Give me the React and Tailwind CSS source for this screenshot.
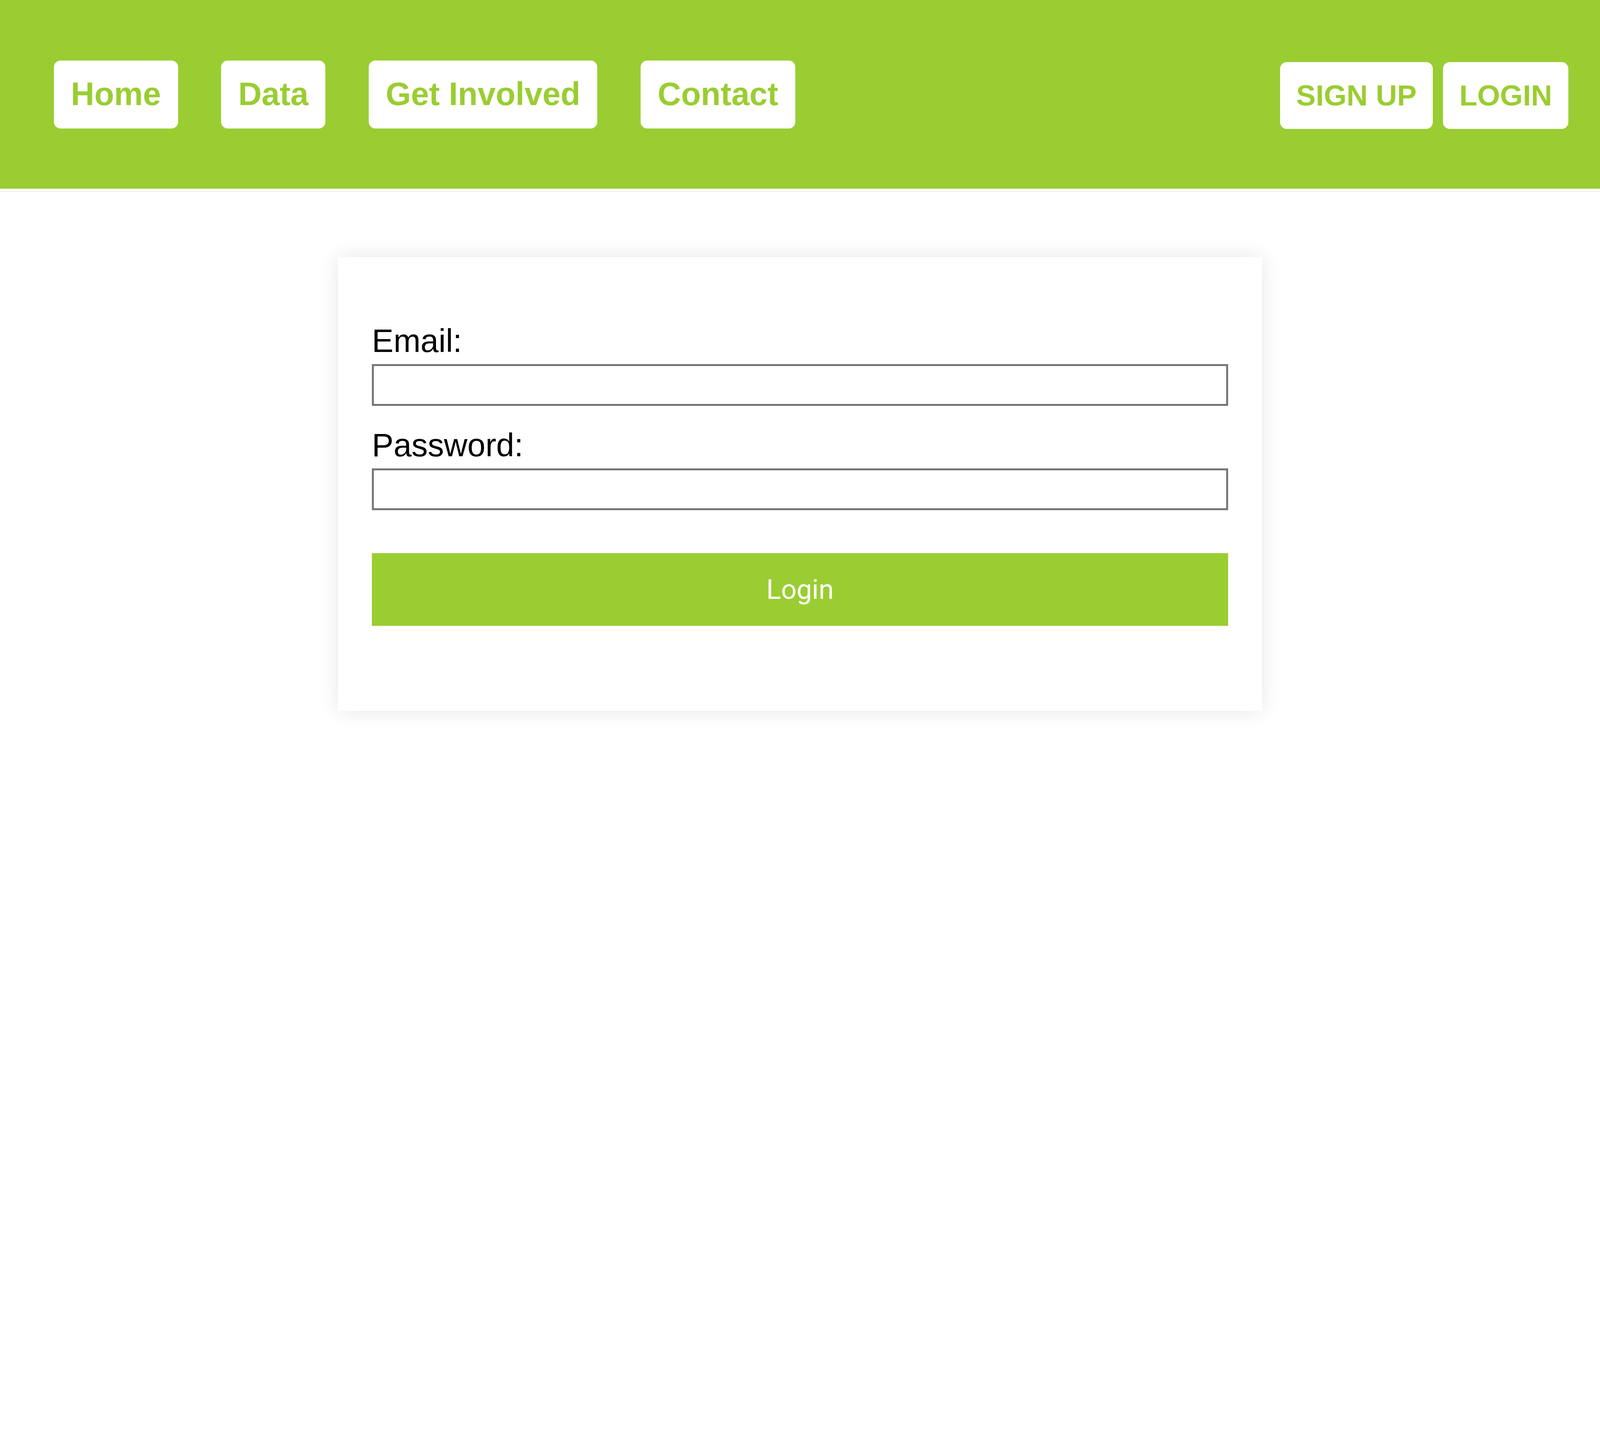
import React from 'react';

const navLinks = ['Home', 'Data', 'Get Involved', 'Contact'];

export default function App() {
    return (
        <div className="min-h-screen bg-white font-['Liberation_Sans',Arial,sans-serif]">
            <header className="flex h-[483px] items-center justify-between bg-[#9acd32] pl-[3.365vw] pr-[1.978vw]">
                <nav className="flex items-center gap-[2.697vw]">
                    {navLinks.map((link) => (
                        <a
                            key={link}
                            href="#"
                            className="flex h-[174px] items-center rounded-[17px] bg-white px-[1.066vw] text-[83px] font-bold whitespace-nowrap text-[#9acd32]"
                        >
                            {link}
                        </a>
                    ))}
                </nav>
                <div className="flex items-center gap-[0.642vw] pt-[6px]">
                    <button className="flex h-[171px] items-center rounded-[17px] bg-white px-[1.015vw] text-[75px] font-bold whitespace-nowrap text-[#9acd32]">
                        SIGN UP
                    </button>
                    <button className="flex h-[171px] items-center rounded-[17px] bg-white px-[1.015vw] text-[75px] font-bold text-[#9acd32]">
                        LOGIN
                    </button>
                </div>
            </header>
            <div className="mt-[6px] h-[2px] bg-[#eef0e6]" />

            <main className="pt-[167px]">
                <div className="mx-auto w-[57.776vw] bg-white px-[2.132vw] pt-[166px] pb-[218px] shadow-[0_0_50px_rgba(0,0,0,0.1)]">
                    <form onSubmit={(e) => e.preventDefault()}>
                        <label htmlFor="email" className="block text-[83px] leading-[98px] text-black">Email:</label>
                        <input
                            id="email"
                            type="email"
                            className="mt-[10px] block h-[107px] w-full border-[5px] border-[#767676] bg-white"
                        />
                        <label htmlFor="password" className="mt-[52px] block text-[83px] leading-[98px] text-black">Password:</label>
                        <input
                            id="password"
                            type="password"
                            className="mt-[10px] block h-[107px] w-full border-[5px] border-[#767676] bg-white"
                        />
                        <button
                            type="submit"
                            className="mt-[110px] flex h-[186px] w-full items-center justify-center bg-[#9acd32] font-['Roboto',sans-serif] text-[70px] text-white"
                        >
                            Login
                        </button>
                    </form>
                </div>
            </main>
        </div>
    );
}
